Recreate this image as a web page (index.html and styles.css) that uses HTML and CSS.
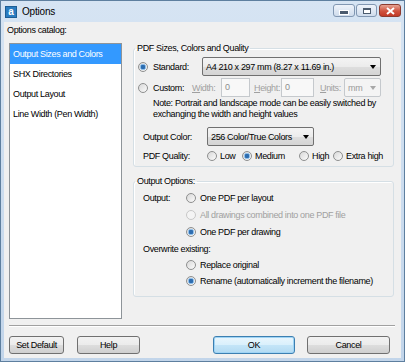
FILE: index.html
```html
<!DOCTYPE html>
<html lang="en">
<head>
  <meta charset="UTF-8" />
  <title>Options</title>
  <link rel="stylesheet" href="styles.css">
</head>
<body>
  <div class="window">
    <div class="titlebar">
      <span class="app-icon">a</span>
      <span class="title">Options</span>
      <div class="caption-buttons">
        <span class="cap-btn cap-min"><i></i></span>
        <span class="cap-btn cap-max"><i></i></span>
        <span class="cap-btn cap-close">
          <svg width="9" height="8" viewBox="0 0 9 8"><path d="M1 1 L8 7 M8 1 L1 7" stroke="#fff" stroke-width="2"/></svg>
        </span>
      </div>
    </div>

    <div class="client">
      <div class="catalog-label">Options catalog:</div>

      <div class="main">
        <ul class="catalog">
          <li class="selected">Output Sizes and Colors</li>
          <li>SHX Directories</li>
          <li>Output Layout</li>
          <li>Line Width (Pen Width)</li>
        </ul>

        <div class="page">
          <fieldset class="group sizes">
            <legend>PDF Sizes, Colors and Quality</legend>

            <div class="size-row">
              <label class="opt opt-standard"><span class="radio checked"></span>Standard:</label>
              <div class="combo combo-standard"><span>A4 210 x 297 mm (8.27 x 11.69 in.)</span><span class="arrow"></span></div>
            </div>

            <div class="size-row">
              <label class="opt opt-custom"><span class="radio"></span>Custom:</label>
              <span class="dim-label lbl-width"><u>W</u>idth:</span>
              <span class="textbox tb-width">0</span>
              <span class="dim-label lbl-height"><u>H</u>eight:</span>
              <span class="textbox tb-height">0</span>
              <span class="dim-label lbl-units"><u>U</u>nits:</span>
              <div class="combo combo-units disabled"><span>mm</span><span class="arrow"></span></div>
            </div>

            <p class="note">Note: Portrait and landscape mode can be easily switched by<br>exchanging the width and height values</p>

            <div class="prop-row">
              <span class="prop-label">Output Color:</span>
              <div class="combo combo-color"><span>256 Color/True Colors</span><span class="arrow"></span></div>
            </div>

            <div class="prop-row quality">
              <span class="prop-label">PDF Quality:</span>
              <div class="quality-options">
                <label class="opt"><span class="radio"></span>Low</label>
                <label class="opt"><span class="radio checked"></span>Medium</label>
                <label class="opt"><span class="radio"></span>High</label>
                <label class="opt"><span class="radio"></span>Extra high</label>
              </div>
            </div>
          </fieldset>

          <fieldset class="group output">
            <legend>Output Options:</legend>
            <div class="output-grid">
              <span class="out-label">Output:</span>
              <label class="opt"><span class="radio"></span>One PDF per layout</label>
              <label class="opt disabled col2"><span class="radio"></span>All drawings combined into one PDF file</label>
              <label class="opt col2"><span class="radio checked"></span>One PDF per drawing</label>
              <span class="out-label wide">Overwrite existing:</span>
              <label class="opt col2"><span class="radio"></span>Replace original</label>
              <label class="opt col2"><span class="radio checked"></span>Rename (automatically increment the filename)</label>
            </div>
          </fieldset>
        </div>
      </div>

      <div class="separator"></div>

      <div class="footer">
        <button class="btn btn-default-set">Set Default</button>
        <button class="btn btn-help">Help</button>
        <button class="btn btn-ok">OK</button>
        <button class="btn btn-cancel">Cancel</button>
      </div>
    </div>
  </div>
</body>
</html>
```

FILE: styles.css
```css
* {
  box-sizing: border-box;
}

body {
  margin: 0;
  font-family: "Liberation Sans", Arial, sans-serif;
  font-size: 9px;
  letter-spacing: -0.35px;
  color: #000;
}

.window {
  width: 405px;
  height: 362px;
  border: 1px solid #5e7f9f;
  background: linear-gradient(#d6e4f3, #c2d5ea);
  padding: 0 3px 3px;
  display: flex;
  flex-direction: column;
}

/* title bar */
.titlebar {
  height: 21px;
  display: flex;
  align-items: center;
  padding-left: 1px;
}

.app-icon {
  width: 12px;
  height: 12px;
  background: #2a7cc0;
  border: 1px solid #1d5d94;
  color: #fff;
  font-weight: bold;
  font-size: 10px;
  letter-spacing: 0;
  line-height: 9px;
  text-align: center;
  margin-right: 5px;
}

.title {
  font-size: 10px;
  letter-spacing: -0.2px;
  flex: 1;
}

.caption-buttons {
  display: flex;
  align-self: flex-start;
  margin-top: 3px;
}

.cap-btn {
  height: 13px;
  border: 1px solid #8197b2;
  border-radius: 3px;
  background: linear-gradient(#eef3fa, #cfdcec);
  display: flex;
  align-items: center;
  justify-content: center;
}

.cap-min {
  width: 22px;
  margin-right: 1px;
}

.cap-min i {
  width: 8px;
  height: 3px;
  margin-top: 4px;
  background: #4b5b6e;
  border: 1px solid #fff;
  box-sizing: content-box;
}

.cap-max {
  width: 21px;
  margin-right: 2px;
}

.cap-max i {
  width: 8px;
  height: 6px;
  border: 1px solid #4b5b6e;
  border-top-width: 2px;
  background: #fff;
}

.cap-close {
  width: 22px;
  border-color: #8c3b2f;
  background: linear-gradient(#e6a393, #d0533f 55%, #c23b28);
}

/* client area */
.client {
  flex: 1;
  background: #f0f0f0;
  padding: 3px 6px 0 5px;
  display: flex;
  flex-direction: column;
}

.catalog-label {
  line-height: 11px;
  margin-left: -2px;
}

.main {
  display: flex;
  margin-top: 7px;
  height: 276px;
}

.catalog {
  list-style: none;
  margin: 0;
  padding: 0;
  width: 113px;
  border: 1px solid #8e9499;
  background: #fff;
}

.catalog li {
  height: 20px;
  line-height: 20px;
  padding-left: 3px;
  white-space: nowrap;
}

.catalog li.selected {
  background: #3399ff;
  color: #fff;
}

.page {
  width: 261px;
  margin-left: 11px;
}

.group {
  margin: 0;
  padding: 3px 6px 2px 4px;
  border: 1px solid #d5dfe5;
  border-radius: 3px;
  box-shadow: inset 1px 1px 0 #fff;
  min-width: 0;
}

.group legend {
  padding: 0 2px;
  margin-left: -3px;
  line-height: 11px;
}

.output {
  margin-top: 9px;
  padding-top: 2px;
  padding-bottom: 7px;
}

/* controls */
.opt {
  display: flex;
  align-items: center;
  white-space: nowrap;
}

.radio {
  width: 10px;
  height: 10px;
  border-radius: 50%;
  border: 1px solid #8e8f8f;
  background: linear-gradient(135deg, #d8d8d8, #fbfbfb);
  margin-right: 5px;
  flex: none;
}

.radio.checked {
  background: radial-gradient(circle, #2d6db0 0 2px, #9cc7ee 2.6px 3px, transparent 3.5px),
              linear-gradient(135deg, #d8d8d8, #fbfbfb);
}

.opt.disabled {
  color: #a0a0a0;
}

.opt.disabled .radio {
  border-color: #c8c8c8;
  background: #f4f4f4;
}

.combo {
  height: 19px;
  border: 1px solid #707070;
  border-radius: 2px;
  background: linear-gradient(#f4f4f4, #ececec 50%, #dedede 51%, #d4d4d4);
  display: flex;
  align-items: center;
  padding: 0 4px 0 3px;
  white-space: nowrap;
}

.arrow {
  margin-left: auto;
  width: 0;
  height: 0;
  border-left: 3.5px solid transparent;
  border-right: 3.5px solid transparent;
  border-top: 4px solid #000;
}

.combo.disabled {
  border-color: #c5c9cd;
  background: #f4f4f4;
  color: #9a9a9a;
}

.combo.disabled .arrow {
  border-top-color: #a8a8a8;
}

.size-row {
  display: flex;
  align-items: center;
  height: 19px;
}

.size-row + .size-row {
  margin-top: 2px;
}

.opt-standard {
  width: 64px;
}

.opt-custom {
  width: 54px;
}

.combo-standard {
  width: 179px;
}

.dim-label {
  color: #a0a0a0;
  white-space: nowrap;
}

.lbl-width {
  width: 29px;
}

.lbl-height {
  width: 27px;
  margin-left: 4px;
}

.lbl-units {
  width: 24px;
  margin-left: 6px;
}

.textbox {
  height: 19px;
  border: 1px solid #c5c9cd;
  background: #f8f8f8;
  color: #8d8d8d;
  padding-left: 3px;
  line-height: 17px;
}

.tb-width {
  width: 29px;
}

.tb-height {
  width: 33px;
}

.combo-units {
  width: 37px;
}

.note {
  margin: 1px 0 0 15px;
  line-height: 11px;
}

.prop-row {
  display: flex;
  align-items: center;
  margin-left: 5px;
}

.note + .prop-row {
  margin-top: 7px;
}

.prop-label {
  width: 64px;
}

.combo-color {
  width: 107px;
}

.quality {
  height: 16px;
  margin-top: 2px;
}

.quality-options {
  display: grid;
  grid-template-columns: 35px 57px 34px auto;
}

.quality-options .radio {
  margin-right: 3px;
}

.output-grid {
  display: grid;
  grid-template-columns: 43px auto;
  grid-template-rows: 17px 17px 17px 17px 16px 16px;
  align-items: center;
  margin-left: 5px;
}

.output-grid .radio {
  margin-right: 4px;
}

.col2 {
  grid-column: 2;
}

.out-label.wide {
  grid-column: 1 / 3;
}

/* footer */
.separator {
  margin-top: 6px;
  height: 2px;
  border-top: 1px solid #a0a0a0;
  border-bottom: 1px solid #fff;
}

.footer {
  display: flex;
  margin-top: 9px;
  padding-right: 5px;
}

.btn {
  height: 18px;
  font-family: inherit;
  font-size: 9px;
  letter-spacing: -0.35px;
  border: 1px solid #707070;
  border-radius: 3px;
  background: linear-gradient(#f2f2f2, #ebebeb 50%, #dddddd 51%, #cfcfcf);
  padding: 0;
  color: #000;
}

.btn-default-set {
  width: 55px;
}

.btn-help {
  width: 63px;
  margin-left: 13px;
}

.btn-ok {
  width: 82px;
  margin-left: auto;
  border-color: #3c7fb1;
  box-shadow: inset 0 0 0 1px #9fd4f5;
  background: linear-gradient(#eaf6fd, #d9f0fc 50%, #c4e5f8 51%, #b2daf2);
}

.btn-cancel {
  width: 83px;
  margin-left: 12px;
}
```
